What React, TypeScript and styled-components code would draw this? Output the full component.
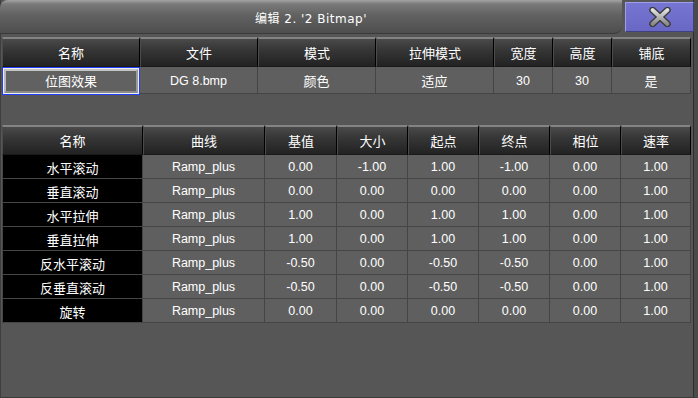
import styled, { createGlobalStyle } from "styled-components";

const GlobalStyle = createGlobalStyle`
  html, body {
    margin: 0;
    padding: 0;
    background: #565656;
  }
  body {
    font-family: "Liberation Sans", "Noto Sans CJK SC", sans-serif;
    font-size: 12.5px;
    color: #fff;
  }
`;

const hasCjk = (s: string) => /[\u4e00-\u9fff]/.test(s);

const Window = styled.div`
  width: 698px;
  height: 398px;
  box-sizing: border-box;
  background: #565656;
  border-left: 1px solid #3e3e3e;
  border-bottom: 1px solid #3a3a3a;
  border-right: 4px solid #4a4a4a;
  box-shadow: inset -1px 0 0 #2e2e2e;
  display: flex;
  flex-direction: column;
`;

const TitleRow = styled.div`
  display: flex;
  height: 34px;
  align-items: stretch;
`;

const TitleBar = styled.div`
  flex: 1;
  border-radius: 8px 0 8px 0;
  margin-left: -1px;
  background: linear-gradient(#a4a4a4 0%, #7a7a7a 12%, #626262 45%, #4e4e4e 100%);
  border-bottom: 1px solid #3a3a3a;
  display: flex;
  align-items: center;
  justify-content: center;
  font-family: "DejaVu Sans", "Noto Sans CJK SC", sans-serif;
  font-size: 12px;
  letter-spacing: 0.5px;
  padding-top: 1px;
`;

const CloseButton = styled.button`
  width: 69px;
  margin: 2px 0 2px 3px;
  padding: 0;
  background: linear-gradient(#7676d2, #6868c4);
  border: 1px solid #a0a0e8;
  border-right-color: #404080;
  border-bottom-color: #404080;
  display: flex;
  align-items: center;
  justify-content: center;
`;

const Content = styled.div`
  display: flex;
  flex-direction: column;
  padding: 3px 2px 0 1px;
`;

const Table = styled.div<{ $gapTop?: number }>`
  display: flex;
  flex-direction: column;
  width: 689px;
  margin-top: ${({ $gapTop }) => $gapTop ?? 0}px;
`;

const Row = styled.div<{ $cols: string; $height: number }>`
  display: grid;
  grid-template-columns: ${({ $cols }) => $cols};
  height: ${({ $height }) => $height}px;
`;

const HeadCell = styled.div`
  box-sizing: border-box;
  display: flex;
  align-items: center;
  justify-content: center;
  font-size: 13px;
  background: linear-gradient(#4a4a4a 0%, #363636 40%, #222 100%);
  border-top: 2px solid #838383;
  border-left: 1px solid #4c4c4c;
  border-right: 1px solid #000;
  border-bottom: 1px solid #1a1a1a;
  padding-bottom: 1px;
`;

const Cell = styled.div<{ $dark?: boolean; $cjk?: boolean }>`
  box-sizing: border-box;
  display: flex;
  align-items: center;
  justify-content: center;
  padding-top: 1px;
  font-size: ${({ $cjk }) => ($cjk ? 13 : 12.5)}px;
  background: ${({ $dark }) => ($dark ? "#000" : "#5f5f5f")};
  border-right: 1px solid #454545;
  border-bottom: 1px solid #454545;
  &:first-child {
    border-left: 1px solid #454545;
  }
`;

const SelectedCell = styled.div`
  box-sizing: border-box;
  border: 1px solid #1f3cff;
  margin-bottom: -1px;
  padding: 1px;
  background: #f0f0f0;
  display: flex;
`;

const RaisedButton = styled.div`
  flex: 1;
  box-sizing: border-box;
  display: flex;
  align-items: center;
  justify-content: center;
  font-size: 13px;
  background: #616161;
  border: 2px solid;
  border-color: #c4c4c4 #9a9a9a #8a8a8a #b8b8b8;
  padding-bottom: 1px;
`;

const CloseIcon = () => (
  <svg width="22" height="20" viewBox="0 0 22 20">
    <defs>
      <linearGradient id="xg" x1="0" y1="0" x2="0" y2="1">
        <stop offset="0" stopColor="#e0e0e0" />
        <stop offset="1" stopColor="#8a8a8a" />
      </linearGradient>
    </defs>
    <g strokeLinecap="round">
      <line x1="3.5" y1="3" x2="18.5" y2="17" stroke="#3a3a3a" strokeWidth="6.5" />
      <line x1="18.5" y1="3" x2="3.5" y2="17" stroke="#3a3a3a" strokeWidth="6.5" />
      <line x1="3.5" y1="3" x2="18.5" y2="17" stroke="url(#xg)" strokeWidth="3.8" />
      <line x1="18.5" y1="3" x2="3.5" y2="17" stroke="url(#xg)" strokeWidth="3.8" />
    </g>
  </svg>
);

const topCols = "138px 118px 118px 118px 59px 59px 79px";
const topHead = ["名称", "文件", "模式", "拉伸模式", "宽度", "高度", "铺底"];
const topRow = ["DG 8.bmp", "颜色", "适应", "30", "30", "是"];

const effCols = "141px 122px 72px 71px 71px 71px 71px 70px";
const effHead = ["名称", "曲线", "基值", "大小", "起点", "终点", "相位", "速率"];
const effRows = [
  ["水平滚动", "Ramp_plus", "0.00", "-1.00", "1.00", "-1.00", "0.00", "1.00"],
  ["垂直滚动", "Ramp_plus", "0.00", "0.00", "0.00", "0.00", "0.00", "1.00"],
  ["水平拉伸", "Ramp_plus", "1.00", "0.00", "1.00", "1.00", "0.00", "1.00"],
  ["垂直拉伸", "Ramp_plus", "1.00", "0.00", "1.00", "1.00", "0.00", "1.00"],
  ["反水平滚动", "Ramp_plus", "-0.50", "0.00", "-0.50", "-0.50", "0.00", "1.00"],
  ["反垂直滚动", "Ramp_plus", "-0.50", "0.00", "-0.50", "-0.50", "0.00", "1.00"],
  ["旋转", "Ramp_plus", "0.00", "0.00", "0.00", "0.00", "0.00", "1.00"],
];

export default function App() {
  return (
    <>
      <GlobalStyle />
      <Window>
        <TitleRow>
          <TitleBar>编辑 2. '2 Bitmap'</TitleBar>
          <CloseButton type="button">
            <CloseIcon />
          </CloseButton>
        </TitleRow>
        <Content>
          <Table>
            <Row $cols={topCols} $height={30}>
              {topHead.map((h, i) => (
                <HeadCell key={i}>{h}</HeadCell>
              ))}
            </Row>
            <Row $cols={topCols} $height={25}>
              <SelectedCell>
                <RaisedButton>位图效果</RaisedButton>
              </SelectedCell>
              {topRow.map((v, i) => (
                <Cell key={i} $cjk={hasCjk(v)}>
                  {v}
                </Cell>
              ))}
            </Row>
          </Table>
          <Table $gapTop={33}>
            <Row $cols={effCols} $height={30}>
              {effHead.map((h, i) => (
                <HeadCell key={i}>{h}</HeadCell>
              ))}
            </Row>
            {effRows.map((r, ri) => (
              <Row key={ri} $cols={effCols} $height={24}>
                {r.map((v, i) => (
                  <Cell key={i} $dark={i === 0} $cjk={hasCjk(v)}>
                    {v}
                  </Cell>
                ))}
              </Row>
            ))}
          </Table>
        </Content>
      </Window>
    </>
  );
}
